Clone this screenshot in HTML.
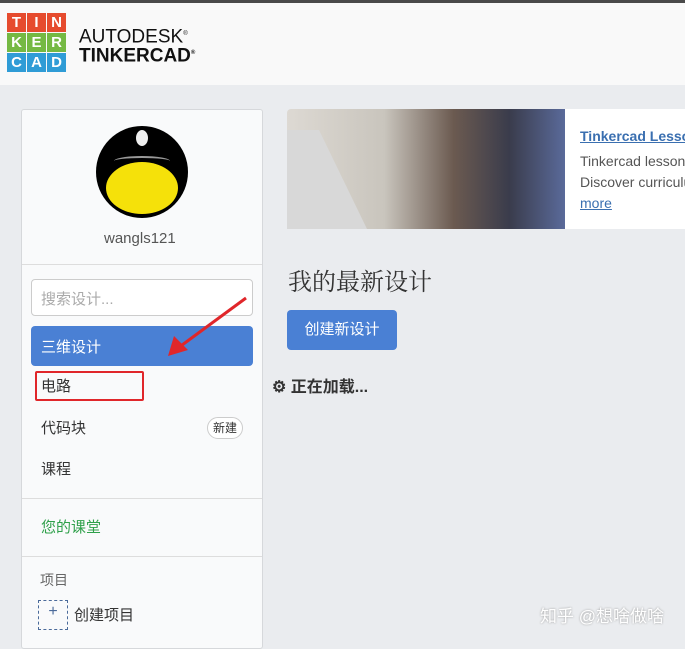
<!DOCTYPE html>
<html><head><meta charset="utf-8"><style>
*{margin:0;padding:0;box-sizing:border-box}
body{width:685px;height:641px;overflow:hidden;background:#eaecef;font-family:"Liberation Sans","Noto Sans CJK SC",sans-serif;position:relative}
.a{position:absolute}
.t{font-size:15px;color:#333}
</style></head><body>
<div class="a" style="left:0;top:0;width:685px;height:3px;background:#4a4a4a"></div>
<div class="a" style="left:0;top:3px;width:685px;height:82px;background:#f9f9f9"></div>
<!-- logo -->
<div class="a" style="left:7px;top:13px;display:grid;grid-template-columns:repeat(3,19px);grid-gap:1px;font:bold 15px 'Liberation Sans',sans-serif;color:#fff;text-align:center;line-height:19px">
<div style="background:#e64b2e">T</div><div style="background:#e64b2e">I</div><div style="background:#e64b2e">N</div>
<div style="background:#75b943">K</div><div style="background:#75b943">E</div><div style="background:#75b943">R</div>
<div style="background:#2f9cd6">C</div><div style="background:#2f9cd6">A</div><div style="background:#2f9cd6">D</div>
</div>
<div class="a" style="left:79px;top:24px;font-size:19px;color:#111;line-height:20px">AUTODESK<sup style="font-size:6px">®</sup></div>
<div class="a" style="left:79px;top:43px;font-size:19px;font-weight:bold;color:#111;line-height:20px">TINKERCAD<sup style="font-size:6px">®</sup></div>
<!-- sidebar -->
<div class="a" style="left:21px;top:109px;width:242px;height:540px;background:#f9fafb;border:1px solid #d6d8db;border-radius:3px"></div>
<div class="a" style="left:96px;top:126px;width:92px;height:92px;border-radius:50%;background:#000;overflow:hidden">
<div class="a" style="left:10px;top:36px;width:72px;height:52px;border-radius:50%;background:#f5e10a"></div>
<div class="a" style="left:40px;top:4px;width:12px;height:16px;border-radius:50%;background:#eee"></div>
<div class="a" style="left:18px;top:30px;width:56px;height:10px;border-top:2px solid #999;border-radius:50%"></div>
</div>
<div class="a t" style="left:104px;top:230px;color:#555">wangls121</div>
<div class="a" style="left:22px;top:264px;width:240px;height:1px;background:#ddd"></div>
<div class="a" style="left:31px;top:279px;width:222px;height:37px;background:#fff;border:1px solid #ccc;border-radius:4px;padding:8px 9px;font-size:15px;color:#aaa">搜索设计...</div>
<div class="a" style="left:31px;top:326px;width:222px;height:40px;background:#4a80d4;border-radius:4px;padding:10px 10px;font-size:15px;color:#fff">三维设计</div>
<div class="a t" style="left:41px;top:375px">电路</div>
<div class="a" style="left:35px;top:371px;width:109px;height:30px;border:2.5px solid #e0262a;border-radius:2px"></div>
<div class="a t" style="left:41px;top:417px">代码块</div>
<div class="a" style="left:207px;top:417px;width:36px;height:22px;border:1px solid #ccc;border-radius:11px;background:#fff;font-size:12px;color:#333;text-align:center;line-height:20px">新建</div>
<div class="a t" style="left:41px;top:458px">课程</div>
<div class="a" style="left:22px;top:498px;width:240px;height:1px;background:#ddd"></div>
<div class="a t" style="left:41px;top:516px;color:#2fa04a">您的课堂</div>
<div class="a" style="left:22px;top:556px;width:240px;height:1px;background:#ddd"></div>
<div class="a" style="left:40px;top:570px;font-size:14px;color:#666">项目</div>
<div class="a" style="left:38px;top:600px;width:30px;height:30px;border:1px dashed #4a6a9a;color:#4a6a9a;text-align:center;font-size:16px;line-height:22px">+</div>
<div class="a t" style="left:74px;top:604px">创建项目</div>
<!-- arrow -->
<svg class="a" style="left:160px;top:290px" width="95" height="75"><line x1="86" y1="8" x2="18" y2="58" stroke="#e0262a" stroke-width="3"/><polygon points="8,66 14,46 28,60" fill="#e0262a"/></svg>
<!-- banner -->
<div class="a" style="left:287px;top:109px;width:278px;height:120px;background:linear-gradient(90deg,#ddd9d3 0%,#c9c5bd 35%,#6b5a50 60%,#3a3c4c 80%,#5a6a9a 100%);border-radius:4px 0 0 0"></div>
<div class="a" style="left:287px;top:130px;width:80px;height:99px;background:#d8d8d8;clip-path:polygon(0 0,40% 0,100% 100%,0 100%)"></div>
<div class="a" style="left:565px;top:109px;width:120px;height:120px;background:#fff"></div>
<div class="a" style="left:580px;top:128px;font-size:14px;font-weight:bold;color:#3a6fb0;text-decoration:underline;white-space:nowrap">Tinkercad Lessons</div>
<div class="a" style="left:580px;top:151px;font-size:14px;color:#555;white-space:nowrap;line-height:21px">Tinkercad lessons<br>Discover curriculum<br><span style="color:#3a6fb0;text-decoration:underline">more</span></div>
<div class="a" style="left:288px;top:262px;font:24px 'Noto Serif CJK SC','Liberation Serif',serif;color:#333">我的最新设计</div>
<div class="a" style="left:287px;top:310px;width:110px;height:40px;background:#4a80d4;border-radius:4px;color:#fff;font-size:15px;text-align:center;line-height:40px">创建新设计</div>
<div class="a" style="left:272px;top:373px;font-size:16px;font-weight:bold;color:#333">⚙ 正在加载...</div>
<div class="a" style="left:540px;top:602px;font-size:17px;color:#fff;text-shadow:0 0 2px #999">知乎 @想啥做啥</div>
</body></html>
